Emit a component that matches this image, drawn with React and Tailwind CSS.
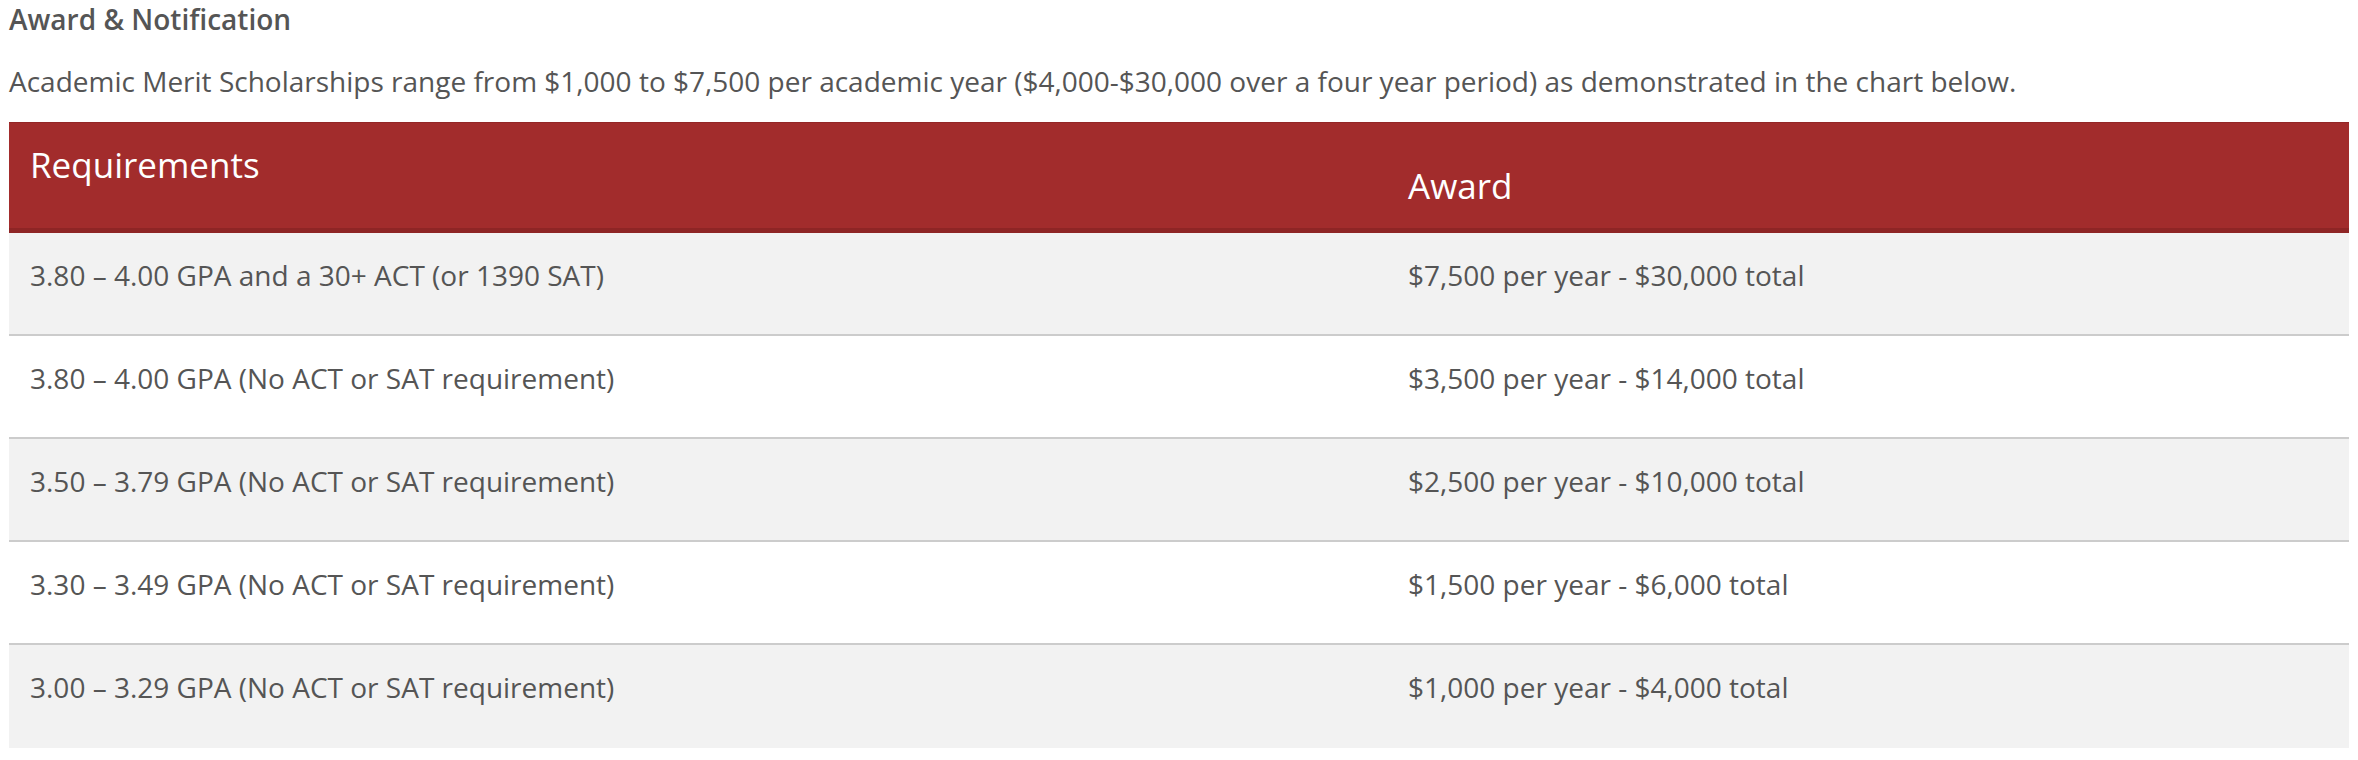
import React from "react";

const rows = [
  ["3.80 – 4.00 GPA and a 30+ ACT (or 1390 SAT)", "$7,500 per year - $30,000 total"],
  ["3.80 – 4.00 GPA (No ACT or SAT requirement)", "$3,500 per year - $14,000 total"],
  ["3.50 – 3.79 GPA (No ACT or SAT requirement)", "$2,500 per year - $10,000 total"],
  ["3.30 – 3.49 GPA (No ACT or SAT requirement)", "$1,500 per year - $6,000 total"],
  ["3.00 – 3.29 GPA (No ACT or SAT requirement)", "$1,000 per year - $4,000 total"],
];

export default function App() {
  return (
    <div
      className="w-[2358px] h-[760px] bg-white text-[#555555] px-[9px]"
      style={{ fontFamily: '"Open Sans", "Liberation Sans", sans-serif' }}
    >
      <h2 className="text-[28px] leading-[38px] font-semibold">Award &amp; Notification</h2>
      <p className="mt-[25px] text-[28px] leading-[36px]">
        Academic Merit Scholarships range from $1,000 to $7,500 per academic year ($4,000-$30,000 over a four year period) as demonstrated in the chart below.
      </p>
      <div className="mt-[23px] w-[2340px]">
        <div className="grid grid-cols-[1378px_1fr] h-[111px] bg-[#a22c2c] border-t border-t-[#932626] border-b-[5px] border-b-[#8e2525] text-white text-[35px] leading-[54px]">
          <div className="pl-[21px] pt-[15px]">Requirements</div>
          <div className="pl-[21px] pt-[36px]">Award</div>
        </div>
        {rows.map(([req, award], i) => (
          <div
            key={i}
            className={
              "grid grid-cols-[1378px_1fr] items-start pt-[24px] h-[103px] text-[28px] leading-[36px] " +
              (i % 2 === 0 ? "bg-[#f2f2f2] " : "bg-white ") +
              (i < rows.length - 1 ? "border-b-2 border-b-[#cccccc]" : "")
            }
          >
            <div className="pl-[21px]">{req}</div>
            <div className="pl-[21px]">{award}</div>
          </div>
        ))}
      </div>
    </div>
  );
}
